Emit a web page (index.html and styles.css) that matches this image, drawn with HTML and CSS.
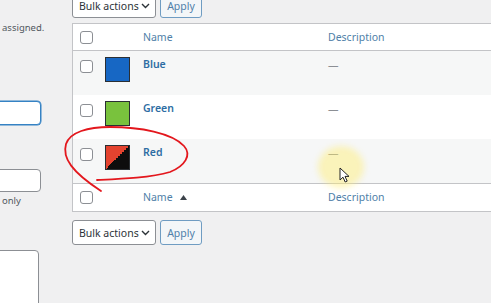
FILE: index.html
```html
<!DOCTYPE html>
<html>
<head>
<meta charset="utf-8">
<link rel="stylesheet" href="styles.css">
</head>
<body>
<div class="page">
  <aside class="col-left">
    <p class="note first">assigned.</p>
    <input class="field focus" type="text">
    <input class="field second" type="text">
    <p class="note only">only</p>
    <textarea class="area"></textarea>
  </aside>
  <main class="col-right">
    <div class="tablenav top">
      <div class="select">Bulk actions <svg class="chev" width="9" height="6" viewBox="0 0 9 6"><polyline points="1,1 4.5,4.5 8,1" fill="none" stroke="#2c3338" stroke-width="1.4"/></svg></div>
      <button class="apply">Apply</button>
    </div>
    <table class="list">
      <colgroup><col class="c-cb"><col class="c-sw"><col class="c-name"><col></colgroup>
      <thead>
        <tr><th class="cell-cb"><input class="cb" type="checkbox"></th><th></th><th class="hd">Name</th><th class="hd">Description</th></tr>
      </thead>
      <tbody>
        <tr class="alt"><td class="cell-cb"><input class="cb" type="checkbox"></td><td class="cell-sw"><span class="sw blue"></span></td><td class="title">Blue</td><td class="desc">—</td></tr>
        <tr><td class="cell-cb"><input class="cb" type="checkbox"></td><td class="cell-sw"><span class="sw green"></span></td><td class="title">Green</td><td class="desc">—</td></tr>
        <tr class="alt"><td class="cell-cb"><input class="cb" type="checkbox"></td><td class="cell-sw"><span class="sw red"></span></td><td class="title">Red</td><td class="desc">—</td></tr>
      </tbody>
      <tfoot>
        <tr><th class="cell-cb"><input class="cb" type="checkbox"></th><th></th><th class="hd">Name <svg class="sort" width="7" height="5" viewBox="0 0 7 5"><polygon points="3.5,0 7,5 0,5" fill="#3c434a"/></svg></th><th class="hd">Description</th></tr>
      </tfoot>
    </table>
    <div class="tablenav bottom">
      <div class="select">Bulk actions <svg class="chev" width="9" height="6" viewBox="0 0 9 6"><polyline points="1,1 4.5,4.5 8,1" fill="none" stroke="#2c3338" stroke-width="1.4"/></svg></div>
      <button class="apply">Apply</button>
    </div>
  </main>
  <svg class="annot" width="491" height="303" viewBox="0 0 491 303"><path d="M97 180 C 120 179, 150 178, 170 172 C 185 166, 192 155, 184 146 C 172 133, 140 127, 110 127 C 88 127, 70 132, 66 144 C 62 158, 72 172, 101 191" fill="none" stroke="#e3171d" stroke-width="1.8" stroke-linecap="round"/></svg>
  <div class="spot"></div>
  <svg class="cursor" width="12" height="17" viewBox="0 0 12 17"><path d="M1 1 L1 13 L4 10.2 L6.2 15 L8.2 14.1 L6 9.4 L10 9.4 Z" fill="#fff" stroke="#222" stroke-width="1" stroke-linejoin="round"/></svg>
</div>
</body>
</html>
```

FILE: styles.css
```css
html, body {
  margin: 0;
  padding: 0;
  width: 491px;
  height: 303px;
  overflow: hidden;
  background: #f0f0f1;
  font-family: "Noto Sans", "Liberation Sans", sans-serif;
  font-size: 10.5px;
  color: #3c434a;
}

.page {
  position: relative;
  display: flex;
  gap: 32px;
  width: 491px;
  height: 303px;
  overflow: hidden;
}

.col-left {
  flex: none;
  width: 40px;
  display: flex;
  flex-direction: column;
}

.col-left > * { flex-shrink: 0; }

.note {
  margin: 0 0 0 2px;
  font-size: 9.5px;
  line-height: 14px;
  color: #50575e;
  white-space: nowrap;
}

.note.first { margin-top: 21px; }
.note.only { margin-top: 2px; }

.field {
  box-sizing: border-box;
  width: 61px;
  margin-left: -20px;
  height: 24px;
  border: 1px solid #8c8f94;
  border-radius: 4px;
  background: #fff;
  padding: 0;
}

.field.focus {
  margin-top: 66px;
  border-color: #3582c4;
  box-shadow: 0 0 0 0.5px #3582c4;
}

.field.second {
  margin-top: 44px;
  height: 23px;
}

.area {
  box-sizing: border-box;
  width: 60px;
  margin-left: -21px;
  margin-top: 42px;
  height: 90px;
  border: 1px solid #8c8f94;
  border-radius: 4px;
  background: #fff;
  resize: none;
  padding: 0;
}

.col-right {
  flex: none;
  width: 450px;
  display: flex;
  flex-direction: column;
}

.col-right > * { flex-shrink: 0; }

.tablenav {
  display: flex;
  gap: 4px;
  height: 25px;
}

.tablenav.top {
  margin-top: -7px;
  margin-bottom: 5px;
}

.tablenav.bottom {
  margin-top: 8px;
}

.select {
  box-sizing: border-box;
  width: 84px;
  height: 25px;
  border: 1px solid #8c8f94;
  border-radius: 3px;
  background: #fff;
  color: #2c3338;
  display: flex;
  align-items: center;
  justify-content: space-between;
  padding: 0 5px 0 6px;
  white-space: nowrap;
}

.chev { flex: none; }

.apply {
  box-sizing: border-box;
  width: 42px;
  height: 25px;
  border: 1px solid #6f9cc2;
  border-radius: 3px;
  background: #f3f6f8;
  color: #4f80aa;
  font-family: inherit;
  font-size: 10.5px;
  padding: 0;
}

.list {
  width: 450px;
  table-layout: fixed;
  border-collapse: separate;
  border-spacing: 0;
  border: 1px solid #c3c4c7;
  border-right: none;
  background: #fff;
}

.c-cb { width: 24px; }
.c-sw { width: 38px; }
.c-name { width: 185px; }

th, td {
  padding: 0 0 0 8px;
  text-align: left;
  font-weight: 400;
}

thead th {
  height: 26px;
  border-bottom: 1px solid #c3c4c7;
  vertical-align: middle;
}

tfoot th {
  height: 27px;
  border-top: 1px solid #c3c4c7;
  vertical-align: middle;
}

.hd {
  color: #4f7fa8;
  line-height: 15px;
}

.sort {
  margin-left: 5px;
  vertical-align: 1px;
}

tbody td {
  height: 44px;
  box-sizing: border-box;
  vertical-align: top;
}

tbody tr.alt td { background: #f6f7f7; }

.cell-cb { padding-left: 7px; }

.cb {
  appearance: none;
  -webkit-appearance: none;
  display: block;
  box-sizing: border-box;
  width: 13px;
  height: 13px;
  margin: 0;
  border: 1px solid #8c8f94;
  border-radius: 3px;
  background: #fff;
}

tbody .cell-cb { padding-top: 9px; }

.cell-sw { padding-top: 6px; }

.sw {
  display: block;
  box-sizing: border-box;
  width: 25px;
  height: 25px;
  border: 1px solid #2b2f33;
}

.sw.blue { background: #1767c4; }
.sw.green { background: #79c23d; }
.sw.red { background: linear-gradient(to bottom right, #e4432f 50%, #0d0d0d 50%); }

.title {
  padding-top: 6px;
  line-height: 15px;
  color: #2d6da3;
  font-weight: 600;
}

.desc {
  padding-top: 7px;
  line-height: 15px;
  color: #8c8f94;
}

.annot {
  position: absolute;
  left: 0;
  top: 0;
  pointer-events: none;
}

.spot {
  position: absolute;
  left: 318px;
  top: 146px;
  width: 46px;
  height: 42px;
  border-radius: 50%;
  background: rgba(255, 238, 110, 0.45);
  filter: blur(3px);
}

.cursor {
  position: absolute;
  left: 339px;
  top: 167px;
}
```
